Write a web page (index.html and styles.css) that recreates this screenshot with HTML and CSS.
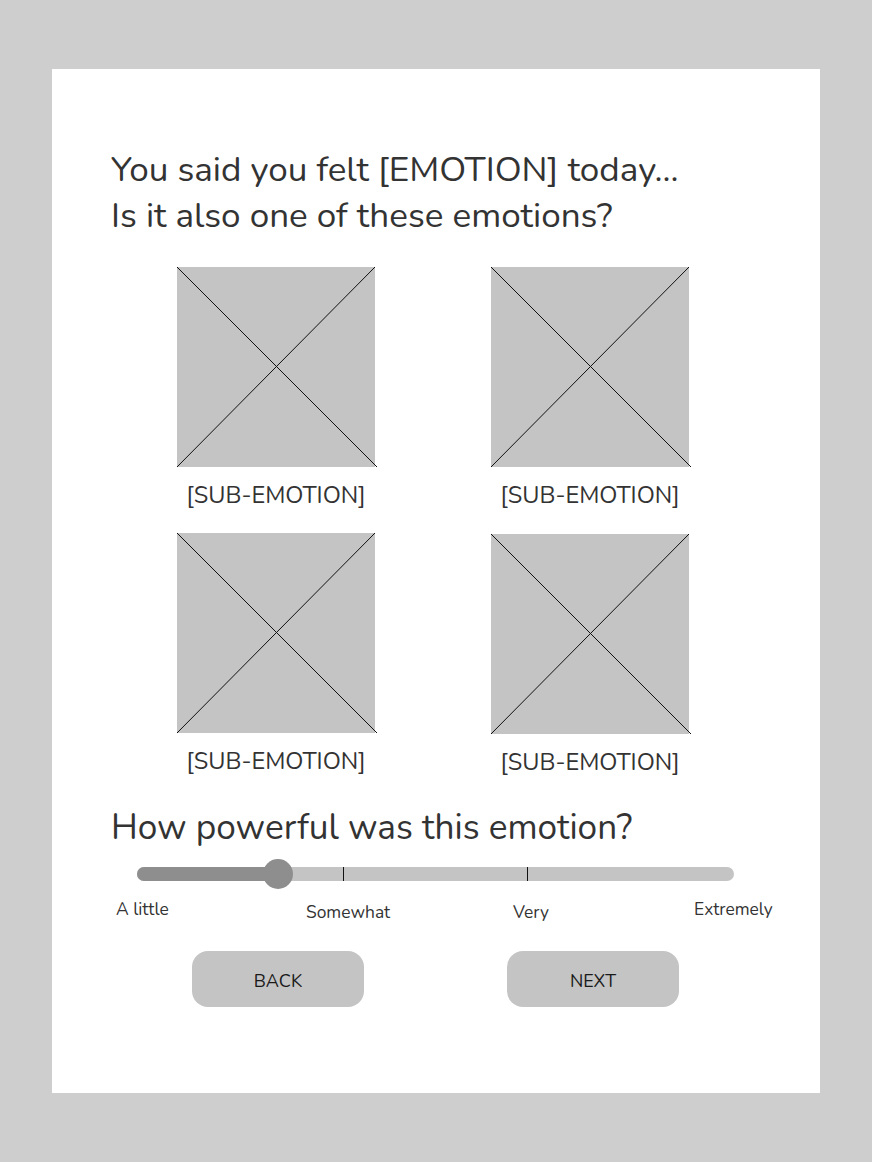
FILE: index.html
```html
<!DOCTYPE html>
<html>
<head>
<meta charset="utf-8">
<link rel="stylesheet" href="styles.css">
</head>
<body>
<main class="card">
  <h1 class="title">You said you felt [EMOTION] today...<br>Is it also one of these emotions?</h1>
  <div class="grid">
    <div class="item">
      <svg class="ph" width="200" height="200" viewBox="0 0 200 200"><rect width="198" height="200" fill="#c4c4c4"/><line x1="0" y1="0" x2="200" y2="200" stroke="#111" stroke-width="1"/><line x1="0" y1="200" x2="198" y2="0" stroke="#111" stroke-width="1"/></svg>
      <div class="label">[SUB-EMOTION]</div>
    </div>
    <div class="item">
      <svg class="ph" width="200" height="200" viewBox="0 0 200 200"><rect width="198" height="200" fill="#c4c4c4"/><line x1="0" y1="0" x2="200" y2="200" stroke="#111" stroke-width="1"/><line x1="0" y1="200" x2="198" y2="0" stroke="#111" stroke-width="1"/></svg>
      <div class="label">[SUB-EMOTION]</div>
    </div>
    <div class="item">
      <svg class="ph" width="200" height="200" viewBox="0 0 200 200"><rect width="198" height="200" fill="#c4c4c4"/><line x1="0" y1="0" x2="200" y2="200" stroke="#111" stroke-width="1"/><line x1="0" y1="200" x2="198" y2="0" stroke="#111" stroke-width="1"/></svg>
      <div class="label">[SUB-EMOTION]</div>
    </div>
    <div class="item item-low">
      <svg class="ph" width="200" height="200" viewBox="0 0 200 200"><rect width="198" height="200" fill="#c4c4c4"/><line x1="0" y1="0" x2="200" y2="200" stroke="#111" stroke-width="1"/><line x1="0" y1="200" x2="198" y2="0" stroke="#111" stroke-width="1"/></svg>
      <div class="label">[SUB-EMOTION]</div>
    </div>
  </div>
  <h2 class="question">How powerful was this emotion?</h2>
  <div class="slider">
    <div class="fill" style="width:141px"></div>
    <span class="tick tick-1"></span>
    <span class="tick tick-2"></span>
    <span class="thumb" style="left:126px"></span>
  </div>
  <div class="scale">
    <span class="scale-label">A little</span>
    <span class="scale-label low">Somewhat</span>
    <span class="scale-label low">Very</span>
    <span class="scale-label">Extremely</span>
  </div>
  <div class="actions">
    <button class="btn">BACK</button>
    <button class="btn">NEXT</button>
  </div>
</main>
</body>
</html>
```

FILE: styles.css
```css
* { box-sizing: border-box; }
html, body { margin: 0; padding: 0; }
body {
  background: #cecece;
  font-family: "Nunito", "Lato", "Open Sans", sans-serif;
  color: #333333;
  padding: 69px 52px;
  min-height: 1162px;
}
.card {
  background: #ffffff;
  width: 768px;
  height: 1024px;
  padding-top: 78px;
}
.title {
  margin: 0 0 0 59px;
  font-size: 35.1px;
  font-weight: 400;
  line-height: 46px;
}
.grid {
  display: grid;
  grid-template-columns: 198px 198px;
  column-gap: 116px;
  margin: 28px 0 0 125px;
}
.item { height: 266px; }
.item-low { padding-top: 1px; }
.ph { display: block; }
.label {
  width: 198px;
  text-align: center;
  font-size: 23.6px;
  line-height: 30px;
  margin-top: 13px;
}
.question {
  margin: 5px 0 0 59px;
  font-size: 35.2px;
  font-weight: 400;
  line-height: 46px;
}
.slider {
  position: relative;
  margin: 17px 0 0 85px;
  width: 597px;
  height: 14px;
  border-radius: 7px;
  background: #c4c4c4;
}
.fill {
  height: 14px;
  border-radius: 7px;
  background: #8e8e8e;
}
.tick {
  position: absolute;
  top: 0;
  width: 1px;
  height: 14px;
  background: #111;
}
.tick-1 { left: 206px; }
.tick-2 { left: 390px; }
.thumb {
  position: absolute;
  top: -8px;
  width: 30px;
  height: 30px;
  border-radius: 50%;
  background: #8e8e8e;
}
.scale {
  display: grid;
  grid-template-columns: 190px 207px 181px auto;
  margin: 17px 0 0 64px;
  font-size: 17.4px;
  line-height: 22px;
}
.scale-label.low { margin-top: 3px; }
.actions {
  display: flex;
  gap: 143px;
  margin: 28px 0 0 140px;
}
.btn {
  width: 172px;
  height: 56px;
  border: none;
  border-radius: 16px;
  background: #c4c4c4;
  font-family: inherit;
  font-size: 18px;
  color: #1a1a1a;
  padding: 3px 0 0;
}
```
